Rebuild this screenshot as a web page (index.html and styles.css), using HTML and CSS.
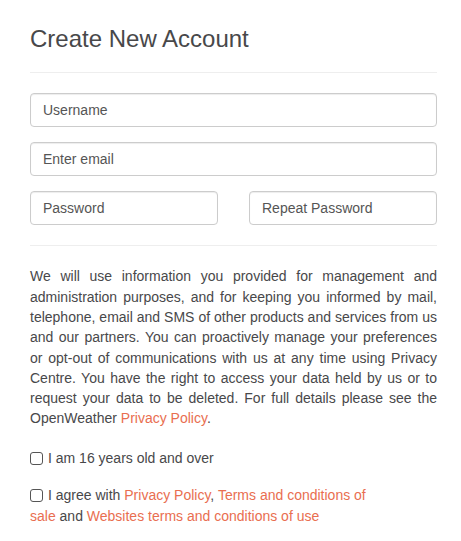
FILE: index.html
```html
<!DOCTYPE html>
<html lang="en">
<head>
<meta charset="utf-8">
<title>Create New Account</title>
<link rel="stylesheet" href="styles.css">
</head>
<body>
<div class="page">
  <h3 class="title">Create New Account</h3>
  <hr class="rule">
  <form class="form">
    <input class="field" type="text" placeholder="Username">
    <input class="field" type="email" placeholder="Enter email">
    <div class="pair">
      <input class="field" type="password" placeholder="Password">
      <input class="field" type="password" placeholder="Repeat Password">
    </div>
  </form>
  <hr class="rule">
  <p class="notice">We will use information you provided for management and administration purposes, and for keeping you informed by mail, telephone, email and SMS of other products and services from us and our partners. You can proactively manage your preferences or opt-out of communications with us at any time using Privacy Centre. You have the right to access your data held by us or to request your data to be deleted. For full details please see the OpenWeather <a class="link" href="#">Privacy Policy</a>.</p>
  <label class="check"><input class="box" type="checkbox">I am 16 years old and over</label>
  <label class="check check-wide"><input class="box" type="checkbox">I agree with <a class="link" href="#">Privacy Policy</a>, <a class="link" href="#">Terms and conditions of sale</a> and <a class="link" href="#">Websites terms and conditions of use</a></label>
</div>
</body>
</html>
```

FILE: styles.css
```css
* { box-sizing: border-box; }
html, body { margin: 0; padding: 0; background: #fff; }
body {
  font-family: "Liberation Sans", Arial, Helvetica, sans-serif;
  font-size: 14px;
  line-height: 20px;
  color: #48484a;
}
.page {
  padding: 0 24px 0 30px;
}
.title {
  margin: 26px 0 0;
  font-size: 24px;
  font-weight: 400;
  line-height: 26.4px;
  color: #48484a;
}
.rule {
  margin: 20px 0;
  border: 0;
  border-top: 1px solid #eee;
  height: 0;
}
.form {
  display: flex;
  flex-direction: column;
  gap: 15px;
}
.field {
  display: block;
  width: 100%;
  height: 34px;
  padding: 6px 12px;
  font-family: inherit;
  font-size: 14px;
  color: #555;
  background: #fff;
  border: 1px solid #ccc;
  border-radius: 4px;
  box-shadow: inset 0 1px 1px rgba(0,0,0,.075);
}
.field::placeholder { color: #555; opacity: 1; }
.pair {
  display: grid;
  grid-template-columns: 1fr 1fr;
  gap: 31px;
}
.notice {
  margin: 0 0 19px;
  line-height: 20.3px;
  text-align: justify;
}
.link {
  color: #e96e50;
  text-decoration: none;
}
.check {
  display: block;
  line-height: 21px;
  margin-bottom: 16px;
}
.check-wide { max-width: 350px; }
.box {
  -webkit-appearance: none;
  appearance: none;
  width: 13px;
  height: 13px;
  margin: 0 5px 0 0;
  border: 1px solid #555;
  border-radius: 3px;
  background: #fff;
  vertical-align: -2px;
}
```
